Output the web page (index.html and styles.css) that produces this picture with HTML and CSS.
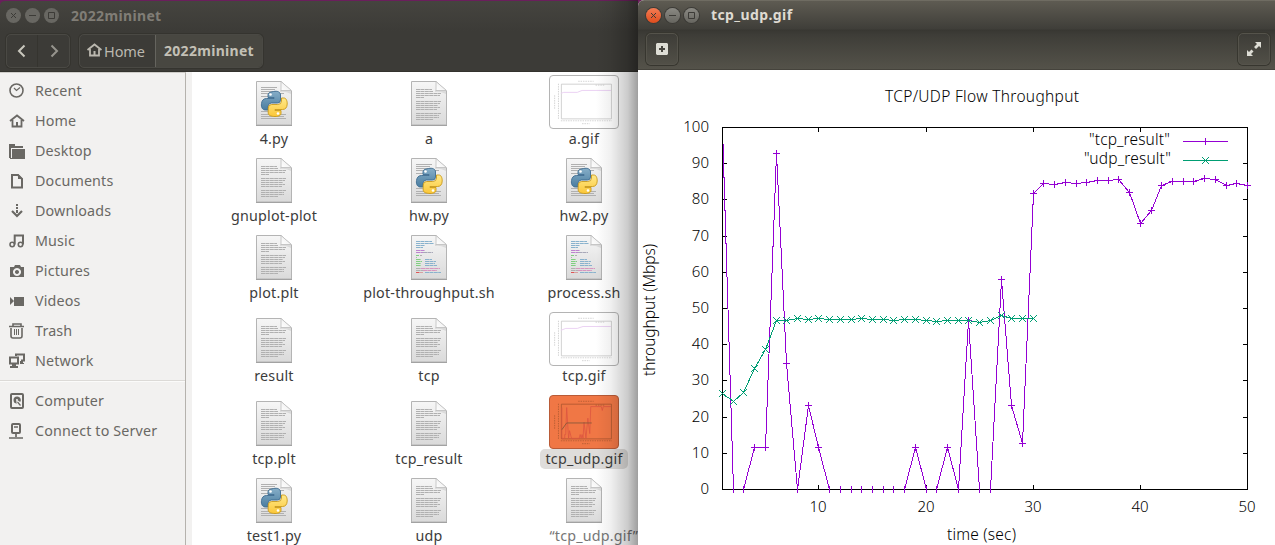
FILE: index.html
```
<!DOCTYPE html>
<html lang="en">
<head>
<meta charset="utf-8">
<title>2022mininet</title>
<link rel="stylesheet" href="styles.css">
</head>
<body>
<svg class="defs" aria-hidden="true">
  <defs>
    <linearGradient id="paper" x1="0" y1="0" x2="0" y2="1"><stop offset="0" stop-color="#f6f6f6"/><stop offset="1" stop-color="#dadada"/></linearGradient>
    <linearGradient id="fold" x1="0" y1="1" x2="1" y2="0"><stop offset="0" stop-color="#fff"/><stop offset=".5" stop-color="#f4f4f4"/><stop offset="1" stop-color="#bbb"/></linearGradient>
    <linearGradient id="blue" x1="0" y1="0" x2="0" y2="1"><stop offset="0" stop-color="#86aec8"/><stop offset="1" stop-color="#4a7da0"/></linearGradient>
    <linearGradient id="yellow" x1="0" y1="0" x2="0" y2="1"><stop offset="0" stop-color="#ffe98a"/><stop offset="1" stop-color="#fbc738"/></linearGradient>
    <symbol id="sheet" viewBox="0 0 36 45">
      <path d="M.5.5H25L35.500 10V44H.5Z" fill="url(#paper)" stroke="#b4b4b4"/>
      <path d="M0 44.500H36" stroke="#a2a2a2"/>
      <path d="M24 9h11v4q-6 -3-11-2z" fill="#ccc" opacity=".6"/>
      <path d="M25 .5V9.500H35.500Z" fill="url(#fold)" stroke="#bdbdbd" stroke-width=".8"/>
    </symbol>
    <symbol id="doc" viewBox="0 0 36 45">
      <use href="#sheet"/>
      <path d="M5 8.500H21M5 10.500H22M5 12.500H30M5 14.500H29M5 16.500H13M5 20.500H30M5 22.500H29M5 24.500H27M5 26.500H29M5 28.500H26M5 32.500H30M5 34.500H28M5 36.500H28M5 38.500H22" stroke="#b0b0b0" stroke-dasharray="4 .4"/>
    </symbol>
    <symbol id="py" viewBox="0 0 36 45">
      <use href="#sheet"/>
      <path d="M5 6.500H21M5 8.500H19M5 10.500H22M5 12.500H28M5 15.500H12M5 30.500H12M5 33.500H30M5 35.500H28M5 37.500H30" stroke="#b0b0b0"/>
      <path d="M17.500 10.500c4-.8 7 .4 7 3.500v5q0 3-3 3h-6q-3.500 0-3.500 3.500V29H9.500C6.500 29 5 26.500 5.500 22.500c.3-3 2-5 5-5h7.500v-1h-6v-3q0-2.500 5.500-3z" fill="url(#blue)" stroke="#3d6c91" stroke-width=".9"/>
      <path d="M25.500 17h2.300c2.500 0 3.500 3 3.400 6-.1 3.500-1.700 5.500-4.700 5.500H19v1h6v3c0 2-2.500 3-6 3s-6.800-1-6.800-3.500V27q0-3.500 3.500-3.500h6q3.800 0 3.800-3.500z" fill="url(#yellow)" stroke="#c99a1a" stroke-width=".9"/>
      <circle cx="14.500" cy="13.500" r="1.300" fill="#fff"/><circle cx="22" cy="32.500" r="1.300" fill="#fff"/>
    </symbol>
    <symbol id="sh" viewBox="0 0 36 45">
      <use href="#sheet"/>
      <g stroke-dasharray="4 .4" stroke="#89b2cd">
        <path d="M5 6.500H21M5 8.500H23M5 10.500H14M5 12.500H12M14 24.500H21M14 26.500H25M14 28.500H24M14 30.500H26M14 37.500H30"/>
        <path d="M5 15.500H14M5 17.500H12" stroke="#bd83ce"/><path d="M12 17.500H22" stroke="#a8a8b8"/>
        <path d="M5 20.500H8M5 24.500H10M5 26.500H11M5 28.500H10M5 30.500H10" stroke="#80cf80"/>
        <path d="M9 20.500H11M5 22.500H6M5 33.500H10M5 35.500H12" stroke="#b0b0b0"/>
        <path d="M10 33.500H29M12 35.500H26" stroke="#d795bf"/>
        <path d="M5 37.500H8" stroke="#df5555"/><path d="M8 37.500H12" stroke="#d7a0a0"/>
      </g>
    </symbol>
    <symbol id="mini" viewBox="0 0 70 54">
      <path d="M11.500 8.500H63.500V44.500H11.500Z" fill="none" stroke="currentColor" stroke-width=".8"/>
      <path d="M29 5.500H45M47 9.500H56M33 49.500H41M4.500 20V34M8.500 8V45M11 46.500H64" stroke="currentColor" stroke-width="1" stroke-dasharray="1.500 1" opacity=".75"/>
    </symbol>
    <symbol id="home" viewBox="0 0 16 16"><path d="M1 8 8 2.500 15 8M3.500 7v6.500h9V7" fill="none" stroke="currentColor" stroke-width="1.800"/><path d="M7 9h2v4H7z" fill="currentColor"/></symbol>
  </defs>
</svg>
<div class="desktop">
  <section class="files">
    <header class="files-head">
      <div class="titlebar">
        <i class="wbtn"><svg viewBox="0 0 15 15"><path d="M5 5l5 5M10 5l-5 5"/></svg></i><i class="wbtn"><svg viewBox="0 0 15 15"><path d="M4 7.500h7"/></svg></i><i class="wbtn"><svg viewBox="0 0 15 15"><path d="M4.500 4.500h6v6h-6z"/></svg></i>
        <b class="title">2022mininet</b>
      </div>
      <div class="toolbar">
        <div class="nav"><span><svg viewBox="0 0 16 16"><path d="M10.500 2.500 5 8l5.500 5.500"/></svg></span><span class="dim"><svg viewBox="0 0 16 16"><path d="M5.500 2.500 11 8l-5.500 5.500"/></svg></span></div>
        <div class="path"><span class="crumb"><svg class="ic"><use href="#home"/></svg>Home</span><b class="crumb on">2022mininet</b></div>
      </div>
    </header>
    <div class="files-body">
      <nav class="side">
        <a><svg class="ic" viewBox="0 0 16 16"><circle cx="7.500" cy="7.500" r="6.500"/><path d="M5 5l2.500 2.500L11 4.500" stroke-width="1.200"/></svg>Recent</a>
        <a><svg class="ic"><use href="#home"/></svg>Home</a>
        <a><svg class="ic" viewBox="0 0 16 16"><path class="f" d="M0 1h6v2h8v2H2v10H0zM3 6h13v10H1v-1h2z"/></svg>Desktop</a>
        <a><svg class="ic" viewBox="0 0 16 16"><path d="M3 2h6L13 6V14.500H3z" stroke-width="2"/><path class="f" d="M9 1v5h5z"/></svg>Documents</a>
        <a><svg class="ic" viewBox="0 0 16 16"><path class="f" d="M7 1h2v2H7zM7 4h2v2H7zM7 7h2v3H7z"/><path d="M3 8l5 5 5-5" stroke-width="2.200"/></svg>Downloads</a>
        <a><svg class="ic" viewBox="0 0 16 16"><circle cx="3.200" cy="11.500" r="2.200"/><circle cx="11.500" cy="11.500" r="2.200"/><path d="M5.700 11.500V2.500H14v9" stroke-width="2"/></svg>Music</a>
        <a><svg class="ic" viewBox="0 0 16 16"><path class="f" fill-rule="evenodd" d="M1 4h4l1-2h5l1 2h3v10H1zM8 5a4 4 0 1 0 .01 0zM8 7a2 2 0 1 1-.01 0z"/></svg>Pictures</a>
        <a><svg class="ic" viewBox="0 0 16 16"><path class="f" d="M1 4l4 4-4 4zM5 4h10v9H5z"/></svg>Videos</a>
        <a><svg class="ic" viewBox="0 0 16 16"><path d="M0 3.500h15M4 3V1h8v2M2 5v8q0 2 2 2h7q2 0 2-2V5"/><path d="M5.500 6v6M7.500 6v6M9.500 6v6" stroke-width="1"/></svg>Trash</a>
        <a><svg class="ic" viewBox="0 0 16 16"><path d="M7 3V1.500h8v6h-3M1 4.500h8v6H1z" stroke-width="2"/><path class="f" d="M3 11h4v2h2v2H1v-2h2zM11 8h3v2h1v1h-4z"/></svg>Network</a>
        <hr>
        <a><svg class="ic" viewBox="0 0 16 16"><rect x="2" y="1" width="12" height="14" rx="1" stroke-width="2"/><path class="f" fill-rule="evenodd" d="M8 3.500a3.500 3.500 0 1 0 0 7l-1-2 2-1 2.200 1.500A3.500 3.500 0 0 0 8 3.500zM8 6a1 1 0 1 1-.01 0z"/><path d="M8.500 9l3 3.500" stroke-width="1.200"/></svg>Computer</a>
        <a><svg class="ic" viewBox="0 0 16 16"><rect x="3" y="1" width="8" height="9" rx="1" stroke-width="2"/><path d="M5 4h4M7 10v4M0 15h14" stroke-width="1.700"/></svg>Connect to Server</a>
      </nav>
      <main class="grid">
        <figure><svg class="page"><use href="#py"/></svg><figcaption>4.py</figcaption></figure>
        <figure><svg class="page"><use href="#doc"/></svg><figcaption>a</figcaption></figure>
        <figure><svg class="thumb" viewBox="0 0 70 54"><use href="#mini"/><path d="M11 18l3-1h14l5-2h30" class="mini-line"/></svg><figcaption>a.gif</figcaption></figure>
        <figure><svg class="page"><use href="#doc"/></svg><figcaption>gnuplot-plot</figcaption></figure>
        <figure><svg class="page"><use href="#py"/></svg><figcaption>hw.py</figcaption></figure>
        <figure><svg class="page"><use href="#py"/></svg><figcaption>hw2.py</figcaption></figure>
        <figure><svg class="page"><use href="#doc"/></svg><figcaption>plot.plt</figcaption></figure>
        <figure><svg class="page"><use href="#sh"/></svg><figcaption>plot-throughput.sh</figcaption></figure>
        <figure><svg class="page"><use href="#sh"/></svg><figcaption>process.sh</figcaption></figure>
        <figure><svg class="page"><use href="#doc"/></svg><figcaption>result</figcaption></figure>
        <figure><svg class="page"><use href="#doc"/></svg><figcaption>tcp</figcaption></figure>
        <figure><svg class="thumb" viewBox="0 0 70 54"><use href="#mini"/><path d="M11 18l5-2h12l6-2h29" class="mini-line"/></svg><figcaption>tcp.gif</figcaption></figure>
        <figure><svg class="page"><use href="#doc"/></svg><figcaption>tcp.plt</figcaption></figure>
        <figure><svg class="page"><use href="#doc"/></svg><figcaption>tcp_result</figcaption></figure>
        <figure class="sel"><svg class="thumb" viewBox="0 0 70 54"><use href="#mini"/><path d="M12 12v32h3v-4h1l1-28 2 32 1-8 2 8h8l1-4 1 4 1-4 1 4 1-17 2 17 2-21 2 16 1-28h11l1 4 1-4h8" class="mini-tcp"/><path d="M12 35l5-7h26" class="mini-udp"/></svg><figcaption>tcp_udp.gif</figcaption></figure>
        <figure><svg class="page"><use href="#py"/></svg><figcaption>test1.py</figcaption></figure>
        <figure><svg class="page"><use href="#doc"/></svg><figcaption>udp</figcaption></figure>
        <figure><svg class="page"><use href="#doc"/></svg><figcaption class="status">“tcp_udp.gif”</figcaption></figure>
      </main>
    </div>
    <div class="shade"></div>
  </section>
  <section class="viewer">
    <header class="viewer-head">
      <div class="titlebar">
        <i class="wbtn close"><svg viewBox="0 0 15 15"><path d="M5 5l5 5M10 5l-5 5"/></svg></i><i class="wbtn"><svg viewBox="0 0 15 15"><path d="M4 7.500h7"/></svg></i><i class="wbtn"><svg viewBox="0 0 15 15"><path d="M4.500 4.500h6v6h-6z"/></svg></i>
        <b class="title">tcp_udp.gif</b>
      </div>
      <div class="viewer-tools">
        <span class="tool"><svg viewBox="0 0 12 12"><path fill="#deddd5" fill-rule="evenodd" d="M1 0h10l1 1v10l-1 1H1l-1-1V1zM5 3v2H3v2h2v2h2V7h2V5H7V3z"/></svg></span>
        <span class="tool"><svg class="full" viewBox="0 0 14 14"><path fill="#deddd5" d="M8 0h6v6l-2-2-3 3-2-2 3-3zM0 14V8l2 2 2.500-2.500 2 2L4 12l2 2z"/></svg></span>
      </div>
    </header>
    <svg class="plot" viewBox="638 70 637 475">
      <defs>
        <marker id="plus" markerUnits="userSpaceOnUse" markerWidth="7" markerHeight="7" refX="3.500" refY="3.500"><path d="M0 3.500H7M3.500 0V7" stroke="#9400d3" shape-rendering="crispEdges"/></marker>
        <marker id="cross" markerUnits="userSpaceOnUse" markerWidth="7" markerHeight="7" refX="3.500" refY="3.500"><path d="M0 0L7 7M0 7L7 0" stroke="#009e73"/></marker>
      </defs>
      <g class="axes">
        <path d="M722.500 127.500H1247.500V489.500H722.500Z"/>
        <path d="M722 163.500h5M722 199.500h5M722 236.500h5M722 272.500h5M722 308.500h5M722 344.500h5M722 380.500h5M722 417.500h5M722 453.500h5M1248 163.500h-5M1248 199.500h-5M1248 236.500h-5M1248 272.500h-5M1248 308.500h-5M1248 344.500h-5M1248 380.500h-5M1248 417.500h-5M1248 453.500h-5"/>
        <path d="M818.500 127v5M926.500 127v5M1033.500 127v5M1140.500 127v5M818.500 490v-5M926.500 490v-5M1033.500 490v-5M1140.500 490v-5"/>
      </g>
      <g class="tcp">
        <path d="M723 144L733.500 489.500"/>
        <path d="M743.500 489.500L754.500 447.500H765.500L776.500 153.500L786.500 363.500L797.500 489.500L808.500 405.500L818.500 447.500L829.500 489.500M904.500 489.500L915.500 447.500L926.500 489.500M936.500 489.500L947.500 447.500L958.500 489.500L968.500 320.500L979.500 489.500M990.500 489.500L1001.500 279.500L1011.500 405.500L1022.500 443.500L1033.500 193.500L1043.500 183.500L1054.500 184.500L1065.500 182.500L1076.500 183.500L1086.500 182.500L1097.500 180.500H1108.500L1118.500 179.500L1129.500 192.500L1140.500 223.500L1151.500 210.500L1161.500 185.500L1172.500 181.500H1193.500L1204.500 178.500L1215.500 179.500L1226.500 185.500L1236.500 183.500L1247.500 185.500"/>
        <polyline class="pts" points="754.500,447.500 765.500,447.500 776.500,153.500 786.500,363.500 808.500,405.500 818.500,447.500 915.500,447.500 947.500,447.500 968.500,320.500 1001.500,279.500 1011.500,405.500 1022.500,443.500 1033.500,193.500 1043.500,183.500 1054.500,184.500 1065.500,182.500 1076.500,183.500 1086.500,182.500 1097.500,180.500 1108.500,180.500 1118.500,179.500 1129.500,192.500 1140.500,223.500 1151.500,210.500 1161.500,185.500 1172.500,181.500 1183.500,181.500 1193.500,181.500 1204.500,178.500 1215.500,179.500 1226.500,185.500 1236.500,183.500 1247.500,185.500"/>
        <path d="M733.500 486v7M743.500 486v7M797.500 486v7M829.500 486v7M840.500 486v7M851.500 486v7M861.500 486v7M872.500 486v7M883.500 486v7M893.500 486v7M904.500 486v7M926.500 486v7M936.500 486v7M958.500 486v7M979.500 486v7M990.500 486v7"/>
        <path d="M1183 141.500H1228M1205.500 138v7"/>
      </g>
      <g class="udp">
        <polyline points="722.500,393.500 733.500,401.500 743.500,392.500 754.500,368.500 765.500,349.500 776.500,320.500 786.500,320.500 797.500,318.500 808.500,319.500 818.500,318.500 829.500,319.500 840.500,319.500 851.500,319.500 861.500,318.500 872.500,319.500 883.500,319.500 893.500,320.500 904.500,319.500 915.500,319.500 926.500,320.500 936.500,321.500 947.500,320.500 958.500,320.500 968.500,320.500 979.500,322.500 990.500,320.500 1001.500,315.500 1011.500,318.500 1022.500,318.500 1033.500,318.500"/>
        <polyline points="1183,160.500 1205.500,160.500 1228,160.500" class="key"/>
      </g>
      <g class="labels">
        <g class="names">
          <text x="885" y="102" textLength="194">TCP/UDP Flow Throughput</text>
          <text x="1089" y="145" textLength="81">"tcp_result"</text>
          <text x="1084" y="164" textLength="87">"udp_result"</text>
          <text x="947" y="540" textLength="69">time (sec)</text>
          <text transform="translate(655 376) rotate(-90)" textLength="132">throughput (Mbps)</text>
        </g>
        <g text-anchor="end">
          <text x="709" y="132">100</text><text x="709" y="168">90</text><text x="709" y="204">80</text><text x="709" y="241">70</text><text x="709" y="277">60</text><text x="709" y="313">50</text><text x="709" y="349">40</text><text x="709" y="385">30</text><text x="709" y="422">20</text><text x="709" y="458">10</text><text x="709" y="494">0</text>
        </g>
        <g text-anchor="middle"><text x="818" y="512">10</text><text x="926" y="512">20</text><text x="1033" y="512">30</text><text x="1140" y="512">40</text><text x="1247" y="512">50</text></g>
      </g>
    </svg>
  </section>
</div>
</body>
</html>
```
FILE: styles.css
```
* { box-sizing: border-box; }
body { margin: 0; font: 15px/20px "Noto Sans", "Open Sans", sans-serif; background: #fff; overflow: hidden; }
.defs { position: absolute; width: 0; height: 0; }
.desktop { display: grid; grid-template-columns: 638px 637px; height: 545px; background: #6a1f5c; }
.files { position: relative; display: flex; flex-direction: column; overflow: hidden; height: 545px; }
.files-head { flex: none; height: 72px; background: linear-gradient(#45443f, #3c3b37 30px, #3c3b37); border-top: 1px solid #6a1f5c; border-bottom: 1px solid #33322e; border-radius: 5px 0 0 0; }
.titlebar { display: flex; align-items: center; height: 29px; padding-left: 6px; gap: 4px; }
.wbtn { display: block; width: 15px; height: 15px; border-radius: 50%; background: #686762; }
.wbtn svg { display: block; width: 15px; height: 15px; fill: none; stroke: #3c3b37; }
.title { margin-left: 8px; font-size: 14px; color: #807d76; }
.files .title { letter-spacing: .35px; }
.toolbar { display: flex; gap: 9px; padding: 4px 6px; }
.nav, .path { display: flex; height: 34px; border: 1px solid #4a4944; border-radius: 5px; box-shadow: 0 0 0 1px #35342f; }
.nav span { display: flex; align-items: center; justify-content: center; width: 30px; }
.nav span + span { border-left: 1px solid #35342f; width: 32px; }
.nav svg { width: 16px; height: 16px; fill: none; stroke: #c9c7bd; stroke-width: 2; }
.nav .dim svg { stroke: #96948d; }
.crumb { display: flex; align-items: center; width: 75px; padding-left: 6px; color: #bbb8af; font-size: 14.500px; line-height: 18px; padding-bottom: 1px; letter-spacing: -.1px; }
.crumb .ic { width: 17px; height: 16px; margin: -2px 1px 0 0; }
.crumb.on { width: 107px; padding-left: 8px; background: #484741; border-left: 1px solid #65645e; border-radius: 0 4px 4px 0; color: #c3c0b6; font-size: 14px; letter-spacing: .3px; }
.files-body { display: flex; height: 473px; }
.side { flex: none; width: 186px; background: #f2f1f0; border-right: 1px solid #b5b2ad; border-top: 1px solid #cfcdc9; padding-top: 3px; color: #6a6864; font-size: 14.300px; letter-spacing: .15px; }
.side a { display: flex; align-items: center; height: 30px; padding-left: 9px; }
.ic { flex: none; width: 16px; height: 16px; margin-right: 10px; fill: none; stroke: currentColor; stroke-width: 1.600; }
.crumb .ic, .ic:has(use) { stroke: none; }
.ic .f { fill: currentColor; stroke: none; }
.side hr { height: 2px; margin: 4px 0; border: 0; background: #dcdad7; border-bottom: 1px solid #fbfbfa; }
.grid { flex: 1; display: grid; grid-template-columns: 155px 155px 155px; grid-template-rows: 77px 77px 77px 83px 83px 77px; padding-left: 4.500px; border-left: 6px solid #f2f1f0; background: #fff; }
.grid figure { display: flex; flex-direction: column; align-items: center; justify-content: flex-end; margin: 0; min-width: 0; color: #3c3c3c; font-size: 14.300px; letter-spacing: .2px; white-space: nowrap; }
.page { width: 36px; height: 45px; margin-bottom: 3px; }
.thumb { width: 70px; height: 54px; border: 1px solid #b4b4b4; border-radius: 4px; background: #fff; color: #c4c4c4; }
.grid figcaption { height: 20px; padding: 0 5px; border-radius: 5px; }
.sel .thumb { background: #f07746; border-color: #b95b37; color: #a8562f; }
.sel figcaption { background: #dfdddb; }
.mini-line, .mini-tcp, .mini-udp { fill: none; stroke: #ead0f2; }
.mini-tcp { stroke: #dc5540; stroke-width: .8; }
.mini-udp { stroke: #8e5a3a; }
.grid .status { align-self: flex-start; margin-left: 38px; color: #777; }
.shade { position: absolute; right: 0; top: 0; width: 42px; height: 545px; background: linear-gradient(90deg, transparent, rgba(0,0,0,.06) 35%, rgba(0,0,0,.2) 75%, rgba(0,0,0,.38)); }
.viewer { display: flex; flex-direction: column; height: 545px; background: #fff; border-radius: 6px 0 0 0; overflow: hidden; }
.viewer-head { flex: none; height: 70px; background: linear-gradient(#5e5b52, #3f3e39 28px, #383732 29px, #3e3d38 34px, #55534a 69px); border-top: 1px solid #6f6c62; border-bottom: 1px solid #45433c; }
.viewer .titlebar { height: 28px; padding-left: 8px; }
.viewer .wbtn { background: linear-gradient(#8b8a84, #66655f); box-shadow: 0 0 0 1px #3c3b37; }
.viewer .close { background: linear-gradient(#f47c54, #df4d1d); }
.viewer .title { color: #dfdbd2; letter-spacing: .4px; }
.viewer-tools { display: flex; justify-content: space-between; padding: 4px 5px 0 8px; }
.tool { display: flex; align-items: center; justify-content: center; width: 32px; height: 32px; border: 1px solid #55534b; border-radius: 5px; box-shadow: 0 0 0 1px #37362f; }
.tool svg { width: 12px; height: 12px; }
.tool svg.full { width: 14px; height: 14px; }
.plot { display: block; width: 637px; height: 475px; }
.axes path { fill: none; stroke: #000; shape-rendering: crispEdges; }
.tcp path, .udp polyline { fill: none; stroke: #9400d3; shape-rendering: crispEdges; }
.tcp .pts { fill: none; stroke: none; marker: url(#plus); }
.udp polyline { stroke: #009e73; marker: url(#cross); }
.udp .key { marker: none; marker-mid: url(#cross); }
.labels { font: 300 15px "Noto Sans", "Open Sans", sans-serif; fill: #000; }
.names { font-size: 15.500px; }
```
